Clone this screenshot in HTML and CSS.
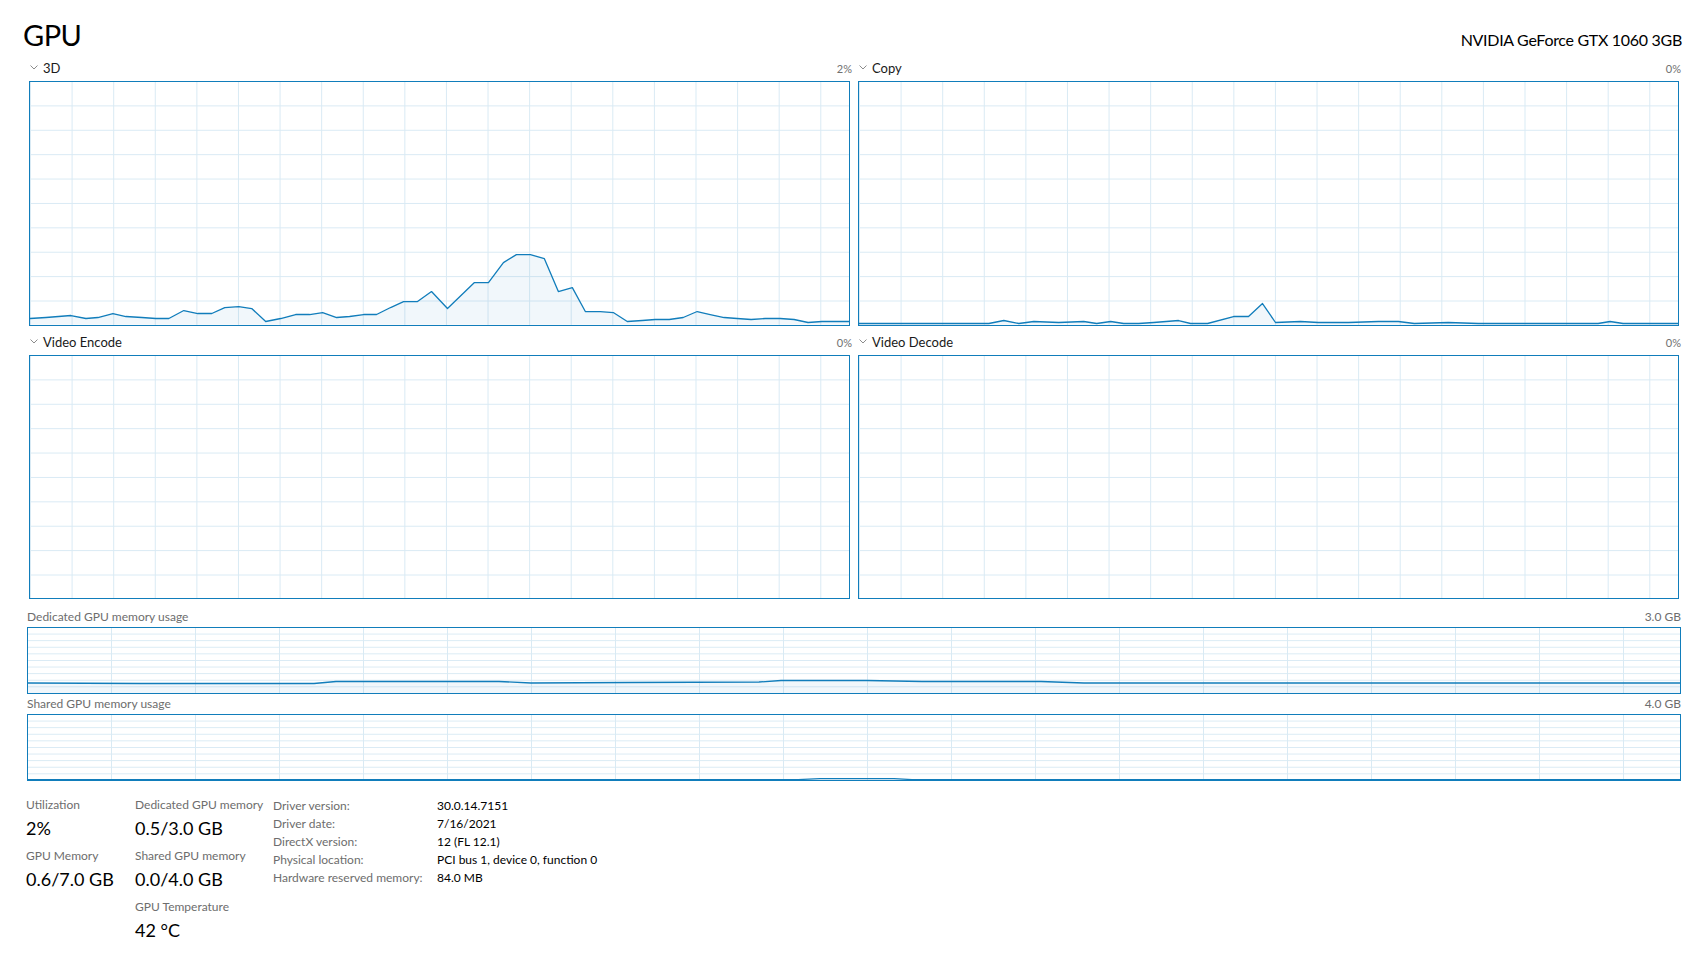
FILE: index.html
```html
<!DOCTYPE html>
<html lang="en">
<head>
    <meta charset="UTF-8">
    <meta name="viewport" content="width=device-width, initial-scale=1.0">
    <title>GPU</title>
    <link rel="stylesheet" href="styles.css">
</head>
<body>
<div class="page">
    <header class="head">
        <h1 class="title">GPU</h1>
        <div class="model">NVIDIA GeForce GTX 1060 3GB</div>
    </header>

    <div class="engines">
        <section class="engine">
            <div class="engine-head">
                <span class="engine-name"><svg class="chev" width="8" height="5" viewBox="0 0 8 5"><polyline points="0.5,0.5 4,4 7.5,0.5"/></svg>3D</span>
                <span class="engine-pct">2%</span>
            </div>
            <div class="chart">
                <svg class="chart-svg" viewBox="0 0 820 243" preserveAspectRatio="none">
                    <polygon class="area" points="0,237 16,236 41,234 56,237 68,236 83,232 96,235 112,236 126,237 139,237 154,229 168,232 182,232 195,226 209,225 222,227 236,240 251,237 266,233 280,233 293,231 307,236 320,235 334,233 347,233 361,226 374,220 388,220 402,210 418,227 445,201 459,201 474,181 487,173 501,173 515,177 529,210 543,206 556,230 571,230 584,231 598,240 613,239 626,238 640,238 654,236 668,230 681,233 695,236 708,237 722,238 736,237 751,237 765,238 779,241 793,240 806,240 820,240 820,243 0,243"/>
                    <polyline class="line" points="0,237 16,236 41,234 56,237 68,236 83,232 96,235 112,236 126,237 139,237 154,229 168,232 182,232 195,226 209,225 222,227 236,240 251,237 266,233 280,233 293,231 307,236 320,235 334,233 347,233 361,226 374,220 388,220 402,210 418,227 445,201 459,201 474,181 487,173 501,173 515,177 529,210 543,206 556,230 571,230 584,231 598,240 613,239 626,238 640,238 654,236 668,230 681,233 695,236 708,237 722,238 736,237 751,237 765,238 779,241 793,240 806,240 820,240"/>
                </svg>
            </div>
        </section>

        <section class="engine">
            <div class="engine-head">
                <span class="engine-name"><svg class="chev" width="8" height="5" viewBox="0 0 8 5"><polyline points="0.5,0.5 4,4 7.5,0.5"/></svg>Copy</span>
                <span class="engine-pct">0%</span>
            </div>
            <div class="chart">
                <svg class="chart-svg" viewBox="0 0 820 243" preserveAspectRatio="none">
                    <polygon class="area" points="0,242 130,242 145,239 160,242 175,240 200,241 225,240 238,242 252,240 265,242 280,242 295,241 320,239 332,242 349,242 375,235 390,235 404,222 417,241 442,240 460,241 490,241 520,240 540,240 556,242 590,241 620,242 740,242 752,240 765,242 820,242 820,243 0,243"/>
                    <polyline class="line" points="0,242 130,242 145,239 160,242 175,240 200,241 225,240 238,242 252,240 265,242 280,242 295,241 320,239 332,242 349,242 375,235 390,235 404,222 417,241 442,240 460,241 490,241 520,240 540,240 556,242 590,241 620,242 740,242 752,240 765,242 820,242"/>
                </svg>
            </div>
        </section>

        <section class="engine">
            <div class="engine-head">
                <span class="engine-name"><svg class="chev" width="8" height="5" viewBox="0 0 8 5"><polyline points="0.5,0.5 4,4 7.5,0.5"/></svg>Video Encode</span>
                <span class="engine-pct">0%</span>
            </div>
            <div class="chart"></div>
        </section>

        <section class="engine">
            <div class="engine-head">
                <span class="engine-name"><svg class="chev" width="8" height="5" viewBox="0 0 8 5"><polyline points="0.5,0.5 4,4 7.5,0.5"/></svg>Video Decode</span>
                <span class="engine-pct">0%</span>
            </div>
            <div class="chart"></div>
        </section>
    </div>

    <section class="mem mem-dedicated">
        <div class="mem-head"><span>Dedicated GPU memory usage</span><span>3.0 GB</span></div>
        <div class="chart chart-mem">
            <svg class="chart-svg" viewBox="0 0 1652 65" preserveAspectRatio="none">
                <polygon class="area" points="0,55 113,55.5 286,55.5 308,53.5 471,53.5 503,55 600,54.5 731,54 753,52.5 839,52.5 894,53.5 1013,53.5 1056,55 1652,55 1652,65 0,65"/>
                <polyline class="line" points="0,55 113,55.5 286,55.5 308,53.5 471,53.5 503,55 600,54.5 731,54 753,52.5 839,52.5 894,53.5 1013,53.5 1056,55 1652,55"/>
            </svg>
        </div>
    </section>

    <section class="mem mem-shared">
        <div class="mem-head"><span>Shared GPU memory usage</span><span>4.0 GB</span></div>
        <div class="chart chart-mem">
            <svg class="chart-svg" viewBox="0 0 1652 65" preserveAspectRatio="none">
                <polyline class="line" points="0,64.6 770,64.6 792,63.6 866,63.6 884,64.6 1652,64.6"/>
            </svg>
        </div>
    </section>

    <div class="stats">
        <div class="stat-col">
            <div class="stat">
                <div class="stat-label">Utilization</div>
                <div class="stat-value">2%</div>
            </div>
            <div class="stat">
                <div class="stat-label">GPU Memory</div>
                <div class="stat-value">0.6/7.0 GB</div>
            </div>
        </div>
        <div class="stat-col">
            <div class="stat">
                <div class="stat-label">Dedicated GPU memory</div>
                <div class="stat-value">0.5/3.0 GB</div>
            </div>
            <div class="stat">
                <div class="stat-label">Shared GPU memory</div>
                <div class="stat-value">0.0/4.0 GB</div>
            </div>
            <div class="stat">
                <div class="stat-label">GPU Temperature</div>
                <div class="stat-value">42 °C</div>
            </div>
        </div>
        <dl class="info">
            <dt>Driver version:</dt><dd>30.0.14.7151</dd>
            <dt>Driver date:</dt><dd>7/16/2021</dd>
            <dt>DirectX version:</dt><dd>12 (FL 12.1)</dd>
            <dt>Physical location:</dt><dd>PCI bus 1, device 0, function 0</dd>
            <dt>Hardware reserved memory:</dt><dd>84.0 MB</dd>
        </dl>
    </div>
</div>
</body>
</html>
```

FILE: styles.css
```css
body{
    margin: 0;
    background: #fff;
    color: #000;
    font-family: Lato, "Noto Sans", sans-serif;
}
.page{
    padding: 15px 19px 0 27px;
}
.head{
    display: flex;
    justify-content: space-between;
    align-items: baseline;
    padding-top: 2px;
    margin-bottom: 7px;
}
.title{
    margin: 0 0 0 -4px;
    font-size: 29px;
    font-weight: 400;
    line-height: 36px;
    letter-spacing: -0.5px;
}
.model{
    font-size: 16px;
    line-height: 20px;
    letter-spacing: -0.3px;
    margin-right: -1px;
}

/* engine graphs */
.engines{
    display: grid;
    grid-template-columns: 1fr 1fr;
    column-gap: 4px;
    row-gap: 8px;
}
.engine-head{
    display: flex;
    justify-content: space-between;
    align-items: baseline;
    height: 16px;
    line-height: 16px;
    padding-left: 3px;
    margin-bottom: 5px;
}
.engine-name{
    font-size: 13px;
    color: #1a1a1a;
}
.engine-pct{
    font-size: 11px;
    color: #707070;
}
.chev{
    vertical-align: 3px;
    margin-right: 5px;
}
.chev polyline{
    fill: none;
    stroke: #8c8c8c;
    stroke-width: 1;
}
.chart{
    box-sizing: border-box;
    height: 244.5px;
    margin: 0 2px;
    border: 1px solid #117dbb;
    overflow: hidden;
    background-color: #fff;
    background-image:
        linear-gradient(90deg, #d9eaf4 1px, transparent 1px),
        linear-gradient(#d9eaf4 1px, transparent 1px);
    background-size: 41.6px 24.4px;
    background-position: 0 -1px;
}
.chart-svg{
    display: block;
    width: 100%;
    height: 100%;
}
.area{
    fill: #117dbb;
    fill-opacity: 0.06;
}
.line{
    fill: none;
    stroke: #117dbb;
    stroke-width: 1.3;
    stroke-linejoin: round;
    vector-effect: non-scaling-stroke;
}

/* memory graphs */
.mem-dedicated{
    margin-top: 10px;
}
.mem-shared{
    margin-top: 2px;
}
.mem-head{
    display: flex;
    justify-content: space-between;
    font-size: 12px;
    line-height: 15px;
    color: #6d6d6d;
    margin-bottom: 3px;
}
.chart-mem{
    height: 67px;
    margin: 0;
    background-size: 84px 6.6px;
    background-position: -1px -1px;
}

/* numbers below */
.stats{
    display: grid;
    grid-template-columns: 109px 138px auto;
    align-items: start;
    margin: 16px 0 0 -1px;
}
.stat + .stat{
    margin-top: 8px;
}
.stat-label{
    font-size: 12px;
    line-height: 15px;
    color: #6d6d6d;
}
.stat-value{
    font-size: 18px;
    line-height: 24px;
    margin-top: 4px;
}
.info{
    display: grid;
    grid-template-columns: 164px auto;
    margin: 0;
    font-size: 12px;
    line-height: 18px;
}
.info dt{
    color: #6d6d6d;
}
.info dd{
    margin: 0;
}
```
